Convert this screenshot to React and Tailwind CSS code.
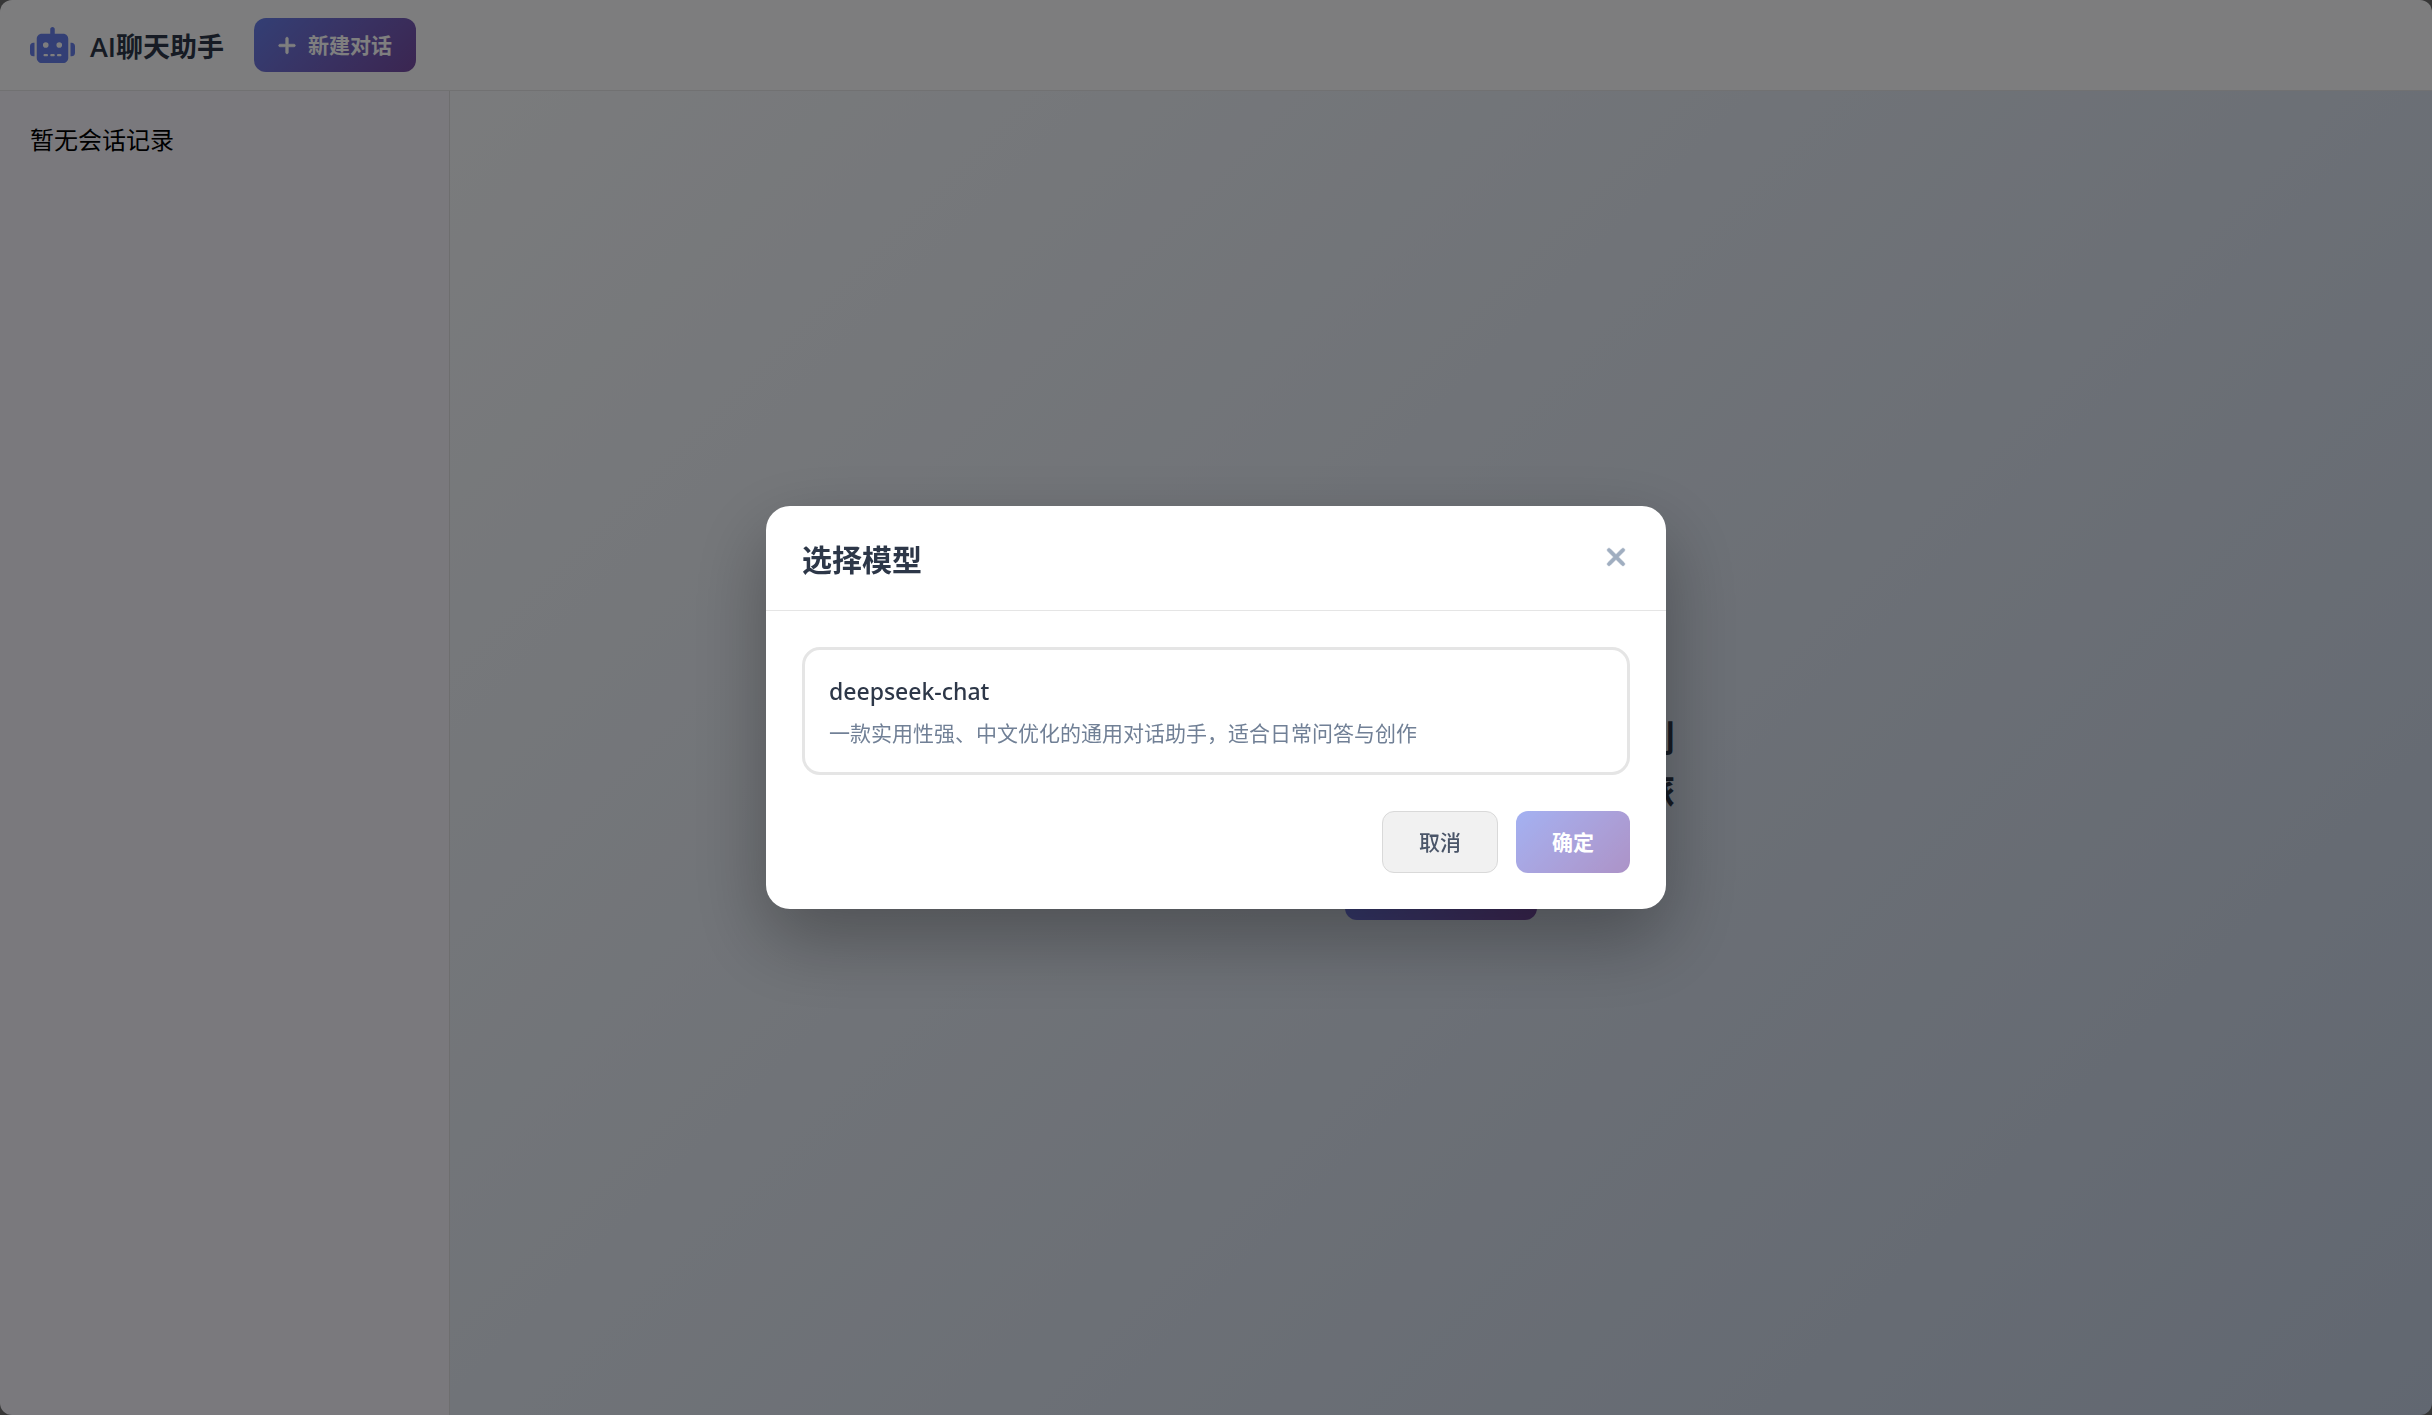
import { FaRobot, FaPlus, FaXmark } from "react-icons/fa6";

function Header() {
  return (
    <header className="flex h-[91px] shrink-0 items-center border-b border-[#e2e2e4] bg-[#fafafc] px-[30px]">
      <div className="flex items-center gap-[15px]">
        <FaRobot className="h-9 w-[45px] text-[#667eea]" aria-hidden="true" />
        <h1 className="pt-1 text-[27px] leading-10 font-semibold text-[#2d3748]">AI聊天助手</h1>
      </div>
      <button
        type="button"
        className="ml-[30px] flex h-[54px] items-center gap-3 rounded-xl bg-linear-135 from-[#667eea] to-[#764ba2] px-6 text-[21px] font-semibold text-white"
      >
        <FaPlus className="h-[21px] w-[18px] stroke-current stroke-[16]" aria-hidden="true" />
        <span className="pt-0.5">新建对话</span>
      </button>
    </header>
  );
}

function Sidebar() {
  return (
    <aside className="w-[450px] shrink-0 border-r border-[#dcdcdf] bg-[#f4f3fa] px-[30px] py-[31px]">
      <p className="text-2xl leading-9 text-black">暂无会话记录</p>
    </aside>
  );
}

function Welcome() {
  return (
    <main className="flex flex-1 flex-col items-center justify-center bg-linear-135 from-[#f5f7fa] to-[#c3cfe2] pt-[127px]">
      <h2 className="text-center text-4xl leading-[52px] font-bold text-[#2d3748]">
        欢迎使用智能聊天助手，请创
        <br />
        建会话开启您的智能对话之旅
      </h2>
      <button
        type="button"
        className="mt-[43px] h-[60px] w-48 rounded-xl bg-linear-135 from-[#667eea] to-[#764ba2] text-2xl font-medium text-white"
      >
        新建对话
      </button>
    </main>
  );
}

function ModelDialog() {
  return (
    <div
      role="dialog"
      aria-modal="true"
      aria-labelledby="dialog-title"
      className="w-full max-w-[900px] rounded-3xl bg-white shadow-[0_30px_75px_rgba(0,0,0,0.3)]"
    >
      <div className="flex h-[105px] items-center justify-between border-b border-[#e5e5e5] px-9">
        <h2 id="dialog-title" className="pt-1 text-3xl leading-11 font-semibold text-[#2d3748]">
          选择模型
        </h2>
        <button type="button" aria-label="关闭" className="mb-0.5 flex size-7 items-center justify-center text-[#a0aec0]">
          <FaXmark className="size-7 stroke-current stroke-[12]" aria-hidden="true" />
        </button>
      </div>
      <div className="p-9">
        <button type="button" className="block w-full rounded-[18px] border-3 border-[#e5e5e5] p-6 text-left">
          <span className="block font-['Noto_Sans'] text-[23px] leading-[34px] font-medium text-[#2d3748]">
            deepseek-chat
          </span>
          <span className="mt-2.5 block text-[21px] leading-[30px] text-[#718096]">
            一款实用性强、中文优化的通用对话助手，适合日常问答与创作
          </span>
        </button>
        <div className="mt-9 flex justify-end gap-[18px] text-[21px]">
          <button
            type="button"
            className="h-[62px] rounded-xl border border-[#d9d9d9] bg-[#f1f1f1] px-9 pt-0.5 font-medium text-[#4a5568]"
          >
            取消
          </button>
          <button
            type="button"
            className="h-[62px] rounded-xl bg-linear-135 from-[#667eea] to-[#764ba2] px-9 pt-0.5 font-semibold text-white opacity-60"
          >
            确定
          </button>
        </div>
      </div>
    </div>
  );
}

export default function App() {
  return (
    <div className="min-h-screen bg-[#6e6e6e] font-['Open_Sans','Noto_Sans_CJK_SC',sans-serif]">
      <div className="flex min-h-screen flex-col overflow-hidden rounded-xl">
        <Header />
        <div className="flex flex-1">
          <Sidebar />
          <Welcome />
        </div>
      </div>
      <div className="fixed inset-0 flex items-center justify-center bg-black/50">
        <ModelDialog />
      </div>
    </div>
  );
}
